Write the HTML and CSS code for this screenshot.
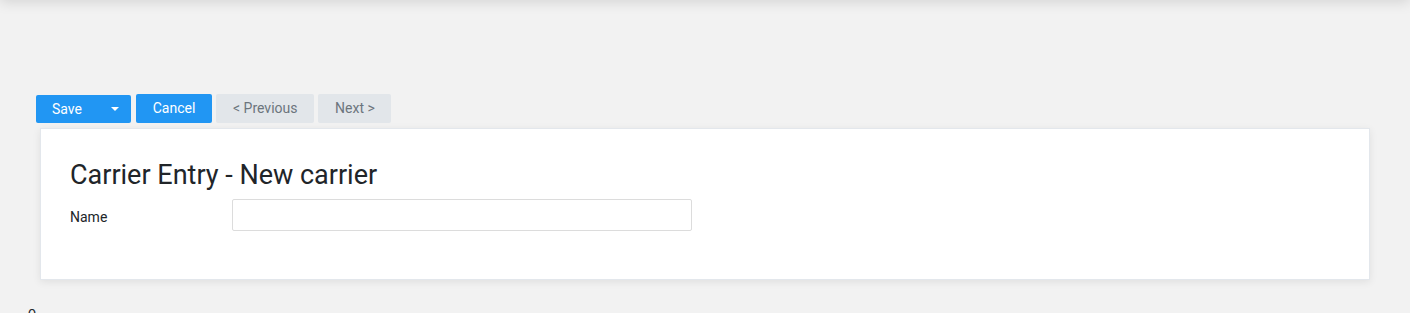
FILE: index.html
```html
<!DOCTYPE html>
<html>
<head>
<meta charset="utf-8">
<link rel="stylesheet" href="styles.css">
</head>
<body>
<div class="topbar"></div>
<main class="page">
  <div class="toolbar">
    <div class="split">
      <button class="btn btn-primary btn-save">Save</button>
      <button class="btn btn-primary btn-caret"><span class="caret"></span></button>
    </div>
    <button class="btn btn-primary btn-cancel">Cancel</button>
    <button class="btn btn-light">&lt; Previous</button>
    <button class="btn btn-light btn-next">Next &gt;</button>
  </div>
  <section class="card">
    <h1 class="title">Carrier Entry - New carrier</h1>
    <div class="row">
      <label class="label">Name</label>
      <input class="input" type="text">
    </div>
  </section>
  <div class="footer-text">o</div>
</main>
</body>
</html>
```

FILE: styles.css
```css
html, body {
  margin: 0;
  padding: 0;
  background: #f2f2f2;
  font-family: Roboto, "Liberation Sans", sans-serif;
  color: #212529;
  overflow: hidden;
  height: 313px;
}
.topbar {
  position: fixed;
  top: -20px;
  left: 0;
  right: 0;
  height: 20px;
  box-shadow: 0 2px 14px rgba(0, 0, 0, 0.13);
}
.page {
  padding: 94px 40px 0 36px;
}
.toolbar {
  display: flex;
  gap: 4px;
  align-items: flex-start;
  height: 29px;
}
.split {
  display: flex;
  margin-right: 1px;
}
.btn {
  font-family: Roboto, "Liberation Sans", sans-serif;
  font-size: 14px;
  border: none;
  border-radius: 2px;
  height: 29px;
  padding: 0 17px;
  line-height: 29px;
  cursor: pointer;
}
.btn-primary {
  background: #2196f3;
  color: #fff;
}
.btn-light {
  background: #e2e6ea;
  color: #6c757d;
}
.btn-cancel {
  width: 76px;
  padding: 0;
}
.btn-next {
  width: 73px;
  padding: 0;
}
.btn-save {
  height: 28px;
  margin-top: 1px;
  line-height: 27px;
  border-radius: 2px 0 0 2px;
  padding: 0 16px;
  width: 62px;
}
.btn-caret {
  height: 28px;
  margin-top: 1px;
  border-radius: 0 2px 2px 0;
  width: 33px;
  padding: 0;
  display: flex;
  align-items: center;
  justify-content: center;
}
.caret {
  display: block;
  width: 0;
  height: 0;
  border-left: 4px solid transparent;
  border-right: 4px solid transparent;
  border-top: 4px solid #fff;
}
.card {
  margin: 5px 0 0 4px;
  background: #fff;
  border: 1px solid #e3e7ec;
  box-shadow: 0 2px 8px rgba(0, 0, 0, 0.08);
  padding: 29px 29px 47px;
  height: 152px;
  box-sizing: border-box;
}
.title {
  margin: 0;
  font-size: 27px;
  font-weight: 400;
  line-height: 34px;
  color: #212529;
}
.row {
  display: flex;
  align-items: center;
  margin-top: 7px;
}
.label {
  width: 162px;
  font-size: 14px;
  padding-top: 3px;
  color: #212529;
}
.input {
  width: 460px;
  height: 32px;
  box-sizing: border-box;
  border: 1px solid #dcdcdc;
  border-radius: 2px;
  background: #fff;
  margin: 0;
}
.footer-text {
  margin: 24px 0 0 -8px;
  font-size: 14px;
  color: #212529;
}
```
